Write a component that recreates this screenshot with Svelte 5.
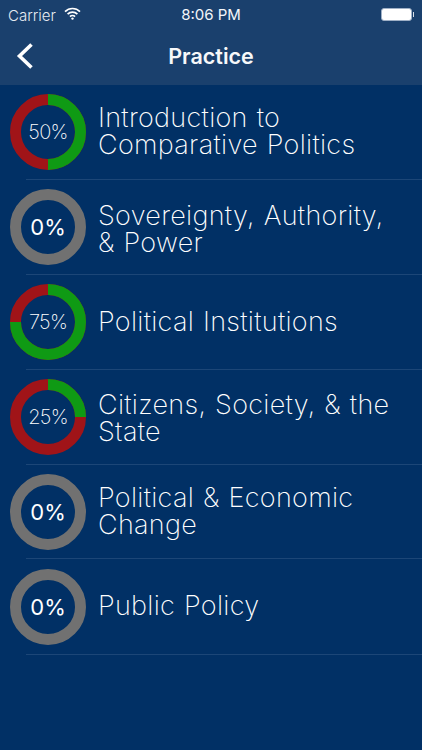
<script>
	// green share of each ring; 0 means not started yet (grey ring)
	// the rows in this table aren't perfectly even, hence h and dy
	const topics = [
		{ title: 'Introduction to Comparative Politics', pct: 50, h: 95, dy: 0 },
		{ title: 'Sovereignty, Authority, & Power', pct: 0, h: 95, dy: 2.5 },
		{ title: 'Political Institutions', pct: 75, h: 95, dy: 0.5 },
		{ title: 'Citizens, Society, & the State', pct: 25, h: 95, dy: 2 },
		{ title: 'Political & Economic Change', pct: 0, h: 94, dy: 0.5 },
		{ title: 'Public Policy', pct: 0, h: 96, dy: 0 }
	];
</script>

<div class="screen">
	<header class="top">
		<div class="status">
			<div class="carrier">
				<span>Carrier</span>
				<svg class="wifi" width="17" height="13" viewBox="0 0 17 13">
					<path d="M1 4.6a10.6 10.6 0 0 1 15 0" />
					<path d="M3.6 7.2a6.9 6.9 0 0 1 9.8 0" />
					<path d="M6 9.6a3.4 3.4 0 0 1 5 0" />
					<circle cx="8.5" cy="11.6" r="1.2" />
				</svg>
			</div>
			<span class="time">8:06 PM</span>
			<div class="battery"><span class="cell"></span><span class="nub"></span></div>
		</div>
		<nav class="bar">
			<svg class="back" width="18" height="28" viewBox="0 0 18 28">
				<path d="M15.5 2.5 3.5 14l12 11.5" />
			</svg>
			<h1>Practice</h1>
		</nav>
	</header>

	<ul class="list">
		{#each topics as t}
			<li class="row" style="height: {t.h - 1}px">
				<div class="ring">
					<svg width="76" height="76" viewBox="0 0 76 76">
						{#if t.pct === 0}
							<circle class="track grey" cx="38" cy="38" r="32.5" />
						{:else}
							<circle class="track red" cx="38" cy="38" r="32.5" />
							<circle
								class="track green"
								cx="38"
								cy="38"
								r="32.5"
								pathLength="100"
								stroke-dasharray="{t.pct} 100"
							/>
						{/if}
					</svg>
					<span class="pct" class:zero={t.pct === 0}>{t.pct}%</span>
				</div>
				<span class="title" style="margin-top: {t.dy * 2 - 2}px">{t.title}</span>
			</li>
		{/each}
	</ul>
</div>

<style>
	:global(body) {
		margin: 0;
		background: #013065;
	}
	.screen {
		width: 422px;
		height: 750px;
		overflow: hidden;
		background: #013065;
		color: #fff;
		font-family: Inter, 'Liberation Sans', sans-serif;
	}
	.top {
		height: 85px;
		background: #1a406d;
	}
	.status {
		height: 29px;
		display: grid;
		grid-template-columns: 1fr auto 1fr;
		align-items: center;
		padding: 0 8px;
	}
	.carrier {
		display: flex;
		align-items: center;
		gap: 8px;
		color: #e6ebf1;
		font-size: 15px;
		font-weight: 300;
		margin-top: 1px;
	}
	.wifi {
		margin-top: -3px;
		fill: #fff;
	}
	.wifi path {
		fill: none;
		stroke: #fff;
		stroke-width: 1.7;
	}
	.time {
		font-size: 15px;
		color: #f4f6f9;
	}
	.battery {
		justify-self: end;
		display: flex;
		align-items: center;
		gap: 1px;
	}
	.cell {
		width: 29px;
		height: 11px;
		background: #fff;
		border: 1px solid #9fb0c6;
		border-radius: 3px;
	}
	.nub {
		width: 1.5px;
		height: 5px;
		background: #d7dee8;
	}
	.bar {
		height: 56px;
		display: flex;
		align-items: center;
		justify-content: center;
		position: relative;
	}
	.back {
		position: absolute;
		left: 16px;
		top: 13px;
		fill: none;
		stroke: #fff;
		stroke-width: 3.6;
	}
	h1 {
		margin: -2px 0 0;
		font-size: 21.5px;
		font-weight: 600;
		color: #f6f8fa;
	}
	.list {
		list-style: none;
		margin: 0;
		padding: 0;
	}
	.row {
		margin-left: 26px;
		border-bottom: 1px solid #1c4677;
		display: flex;
		align-items: center;
		gap: 12px;
	}
	.ring {
		position: relative;
		width: 76px;
		height: 76px;
		margin-left: -16px;
		flex: none;
	}
	.ring svg {
		display: block;
		transform: rotate(-90deg);
	}
	.track {
		fill: none;
		stroke-width: 11;
	}
	.red {
		stroke: #a01418;
	}
	.green {
		stroke: #0f9a14;
	}
	.grey {
		stroke: #717171;
	}
	.pct {
		position: absolute;
		inset: 0;
		display: flex;
		align-items: center;
		justify-content: center;
		font-weight: 200;
		font-size: 20px;
		letter-spacing: -0.7px;
		color: #fff;
	}
	.pct.zero {
		font-weight: 400;
		font-size: 22px;
		letter-spacing: 0;
	}
	.title {
		font-weight: 200;
		font-size: 27px;
		line-height: 27px;
		letter-spacing: 0.3px;
		word-spacing: 1px;
		color: #fff;
		padding-right: 23px;
	}
</style>
